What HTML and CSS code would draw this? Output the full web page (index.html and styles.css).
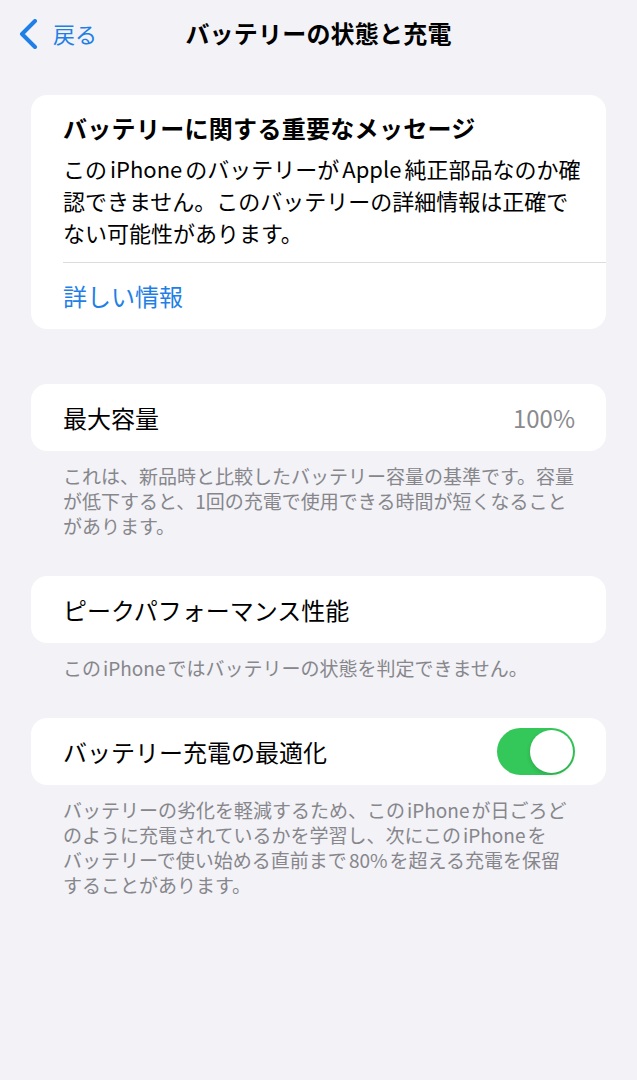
FILE: index.html
```html
<!DOCTYPE html>
<html lang="ja">
<head>
  <meta charset="UTF-8" />
  <meta name="viewport" content="width=device-width, initial-scale=1" />
  <title>バッテリーの状態と充電</title>
  <link rel="stylesheet" href="styles.css">
</head>
<body>
  <div class="navbar">
    <a class="back-btn" href="#">
      <svg class="chevron" width="20" height="30" viewBox="0 0 20 30">
        <polyline points="16,2 3,15 16,28" fill="none" stroke="currentColor" stroke-width="4" stroke-linecap="round" stroke-linejoin="round" />
      </svg>
      <span>戻る</span>
    </a>
    <div class="nav-title">バッテリーの状態と充電</div>
    <div></div>
  </div>

  <!-- Important message -->
  <div class="card message-card">
    <div class="message-body">
      <div class="message-title">バッテリーに関する重要なメッセージ</div>
      <p class="message-text">
        <span class="line">この<span class="latin">iPhone</span>のバッテリーが<span class="latin">Apple</span>純正部品なのか確</span>
        <span class="line">認できません。このバッテリーの詳細情報は正確で</span>
        <span class="line">ない可能性があります。</span>
      </p>
    </div>
    <a class="message-link" href="#">詳しい情報</a>
  </div>

  <div class="section first-section">
    <div class="card row">
      <span class="row-label">最大容量</span>
      <span class="row-value">100%</span>
    </div>
    <p class="footnote">
      <span class="line">これは、新品時と比較したバッテリー容量の基準です。容量</span>
      <span class="line">が低下すると、1回の充電で使用できる時間が短くなること</span>
      <span class="line">があります。</span>
    </p>
  </div>

  <div class="section">
    <div class="card row">
      <span class="row-label">ピークパフォーマンス性能</span>
    </div>
    <p class="footnote">
      <span class="line">この<span class="latin">iPhone</span>ではバッテリーの状態を判定できません。</span>
    </p>
  </div>

  <div class="section">
    <div class="card row">
      <span class="row-label">バッテリー充電の最適化</span>
      <span class="switch on"><span class="knob"></span></span>
    </div>
    <p class="footnote">
      <span class="line">バッテリーの劣化を軽減するため、この<span class="latin">iPhone</span>が日ごろど</span>
      <span class="line">のように充電されているかを学習し、次にこの<span class="latin">iPhone</span>を</span>
      <span class="line">バッテリーで使い始める直前まで<span class="latin">80%</span>を超える充電を保留</span>
      <span class="line">することがあります。</span>
    </p>
  </div>
</body>
</html>
```

FILE: styles.css
```css
body {
  margin: 0;
  background: #f2f2f7;
  color: #000;
  font-family: "Noto Sans CJK JP", "Noto Sans", sans-serif;
  width: 637px;
  min-height: 1080px;
}

p {
  margin: 0;
}

.line {
  display: block;
  white-space: nowrap;
}

.latin {
  margin: 0 3px;
}

/* Top navigation */
.navbar {
  height: 70px;
  box-sizing: border-box;
  padding-bottom: 4px;
  display: grid;
  grid-template-columns: 1fr auto 1fr;
  align-items: center;
}

.back-btn {
  display: flex;
  align-items: center;
  gap: 14px;
  padding-left: 19px;
  color: #1f7fe6;
  text-decoration: none;
  font-size: 22px;
  line-height: 30px;
}

.chevron {
  margin-top: 2px;
}

.nav-title {
  font-size: 24px;
  font-weight: bold;
  line-height: 30px;
  letter-spacing: 0.2px;
}

/* Cards */
.card {
  background: #fff;
  border-radius: 16px;
  margin: 0 31px;
}

.message-card {
  margin-top: 25px;
  padding-bottom: 17px;
}

.message-body {
  margin-left: 32px;
  padding: 17px 20px 14px 0;
  border-bottom: 1px solid #dcdce0;
}

.message-title {
  font-size: 24px;
  font-weight: bold;
  line-height: 32px;
  margin-bottom: 8px;
  letter-spacing: 0.3px;
}

.message-text {
  font-size: 22px;
  line-height: 32px;
}

.message-link {
  display: block;
  margin-top: 17px;
  padding-left: 32px;
  font-size: 24px;
  line-height: 32px;
  color: #1f7fe6;
  text-decoration: none;
}

/* Setting rows */
.section {
  margin-bottom: 38px;
}

.first-section {
  margin-top: 55px;
}

.row {
  height: 67px;
  display: flex;
  align-items: center;
  justify-content: space-between;
  padding: 0 31px 0 32px;
}

.row-label {
  font-size: 24px;
}

.row-value {
  font-size: 24px;
  color: #8a8a8e;
}

.footnote {
  margin: 12px 31px 0 63px;
  font-size: 19px;
  line-height: 25px;
  color: #86868b;
}

.footnote .latin {
  margin: 0 2px;
}

/* Toggle switch */
.switch {
  width: 78px;
  height: 47px;
  border-radius: 24px;
  background: #e9e9ea;
  display: flex;
  align-items: center;
  padding: 2px;
  box-sizing: border-box;
}

.switch.on {
  background: #34c759;
  justify-content: flex-end;
}

.knob {
  width: 43px;
  height: 43px;
  border-radius: 50%;
  background: #fff;
  box-shadow: 0 2px 4px rgba(0, 0, 0, 0.15);
}
```
